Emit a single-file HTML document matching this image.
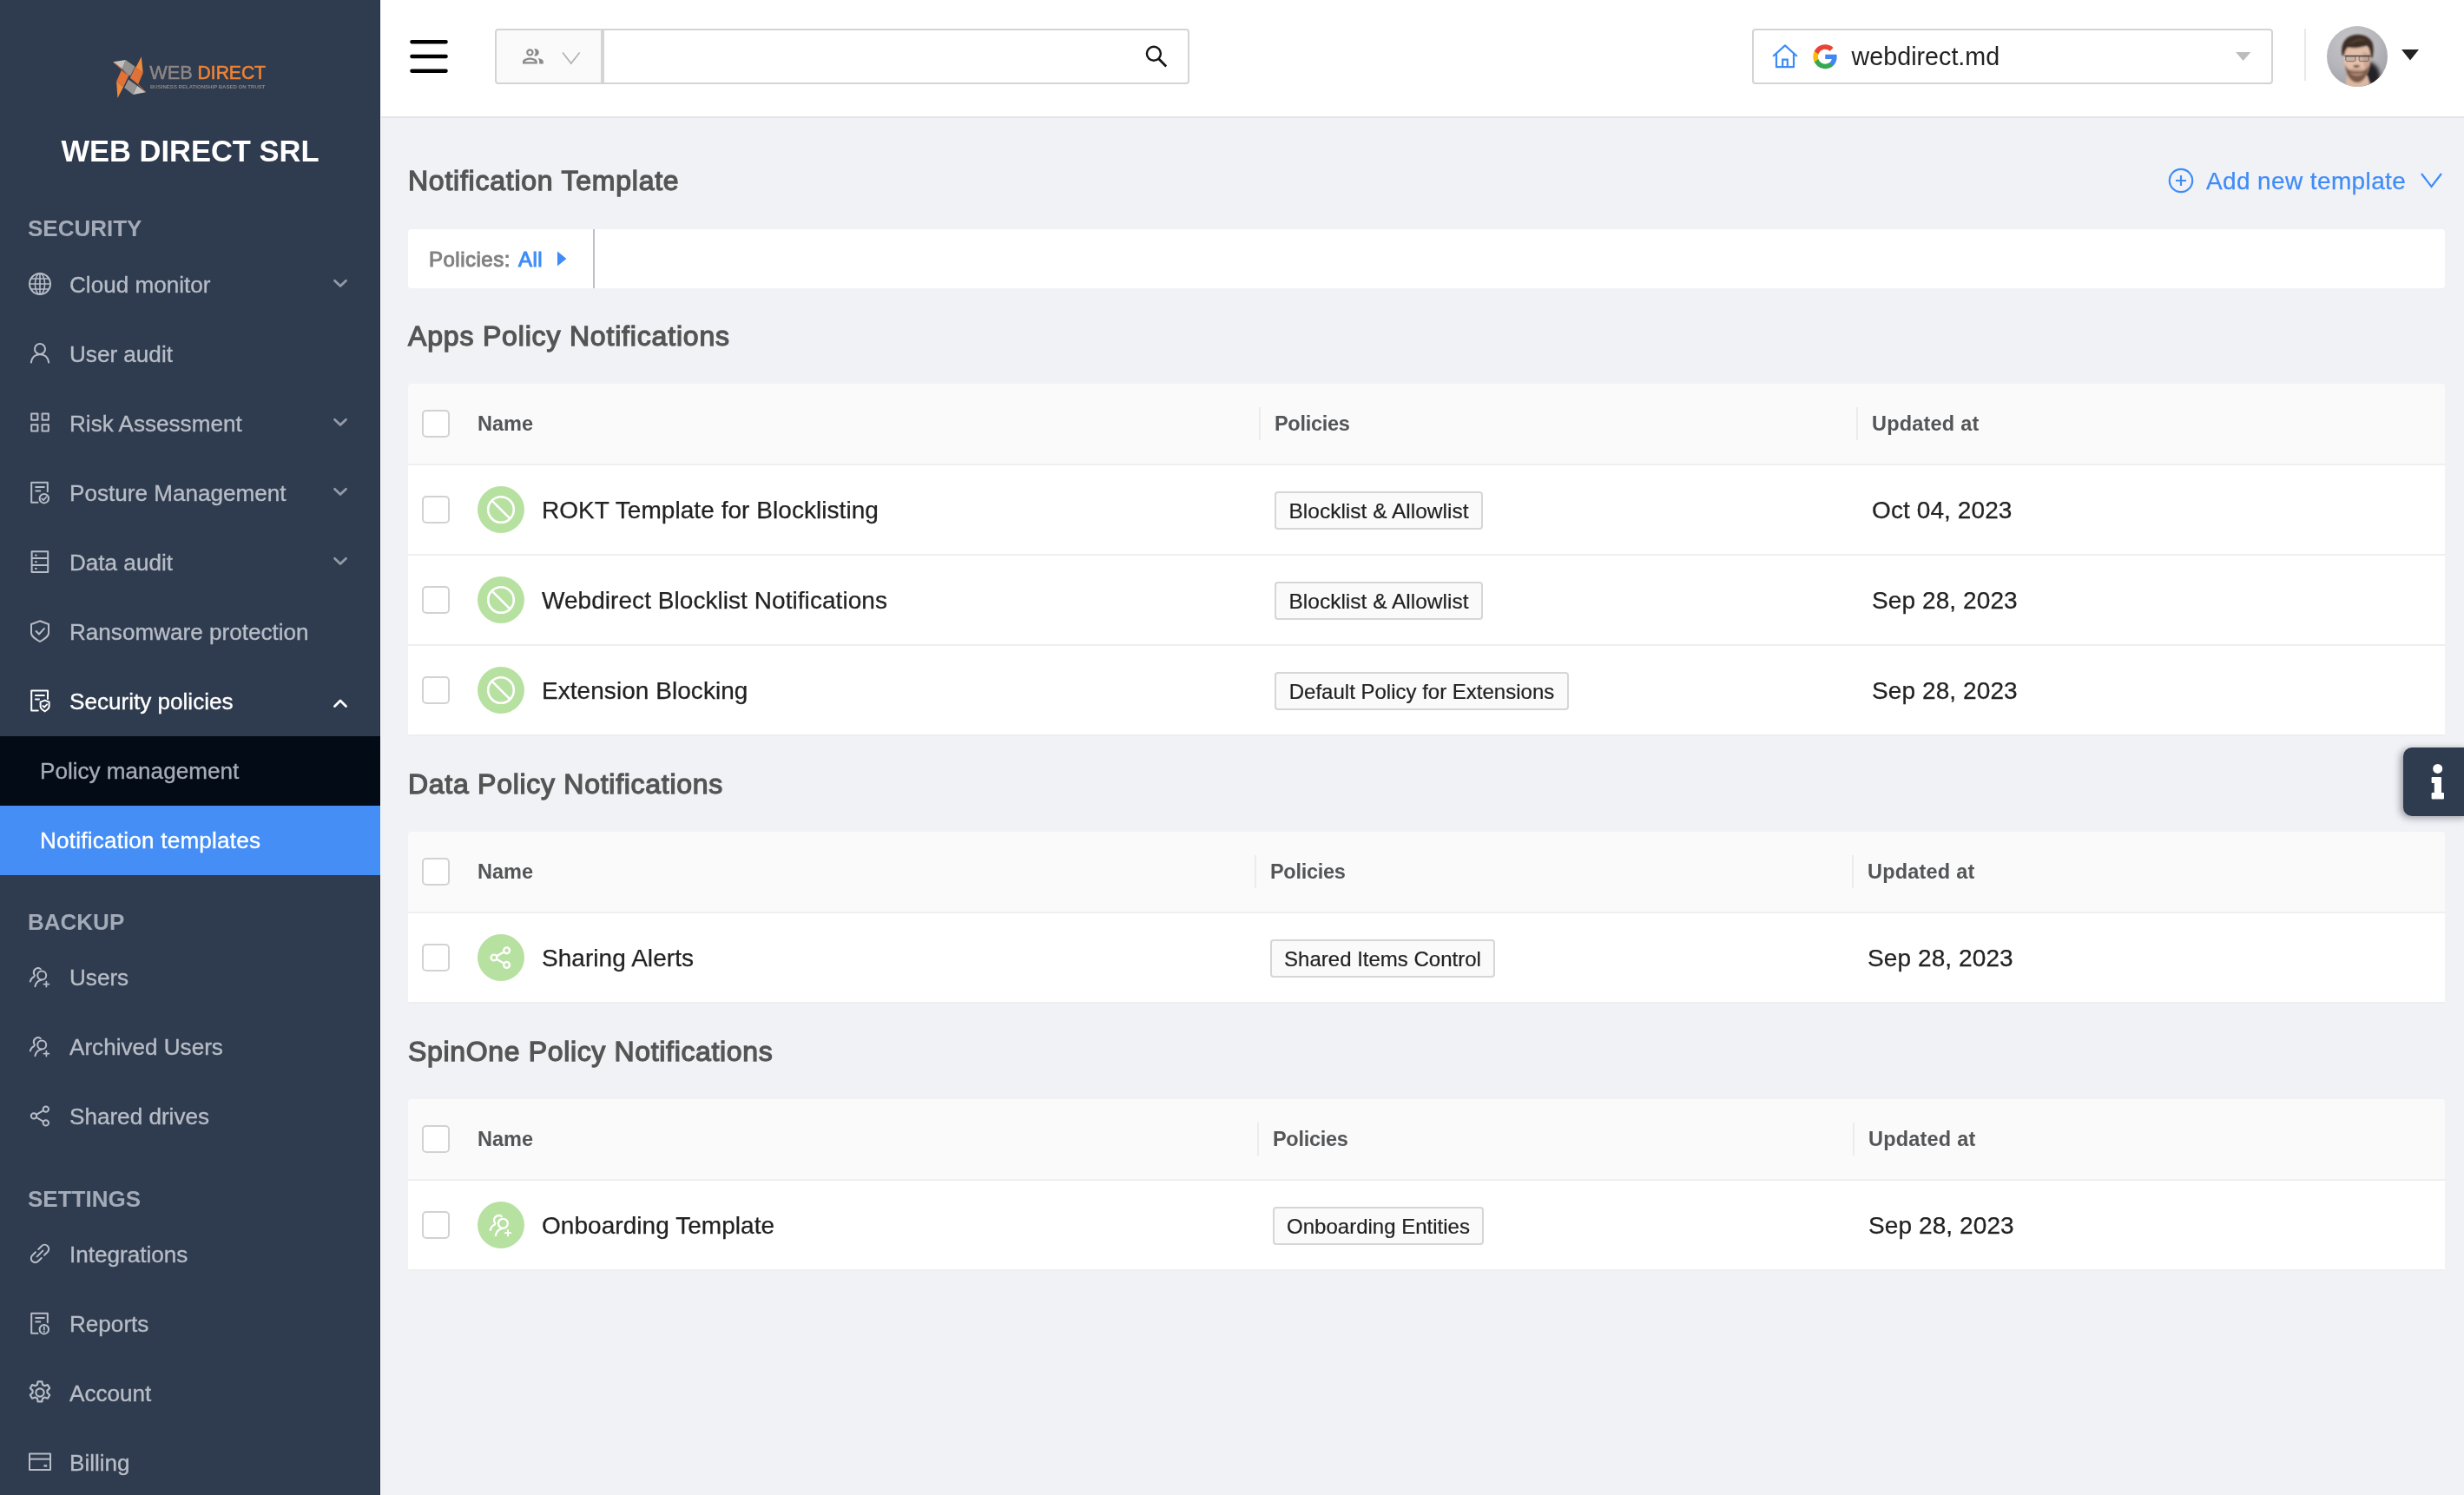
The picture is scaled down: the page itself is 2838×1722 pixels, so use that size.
<!DOCTYPE html>
<html lang="en">
<head>
<meta charset="utf-8">
<title>Notification Template</title>
<style>
*{box-sizing:border-box;margin:0;padding:0}
html,body{width:2838px;height:1722px;overflow:hidden;background:#f1f2f6;font-family:"Liberation Sans",sans-serif;}
html{will-change:transform}
body{position:relative}
.abs{position:absolute}
/* ---------- sidebar ---------- */
#sidebar{position:absolute;left:0;top:0;width:438px;height:1722px;background:#2f3b4e;overflow:hidden}
#sidebar::after{content:"";position:absolute;right:0;top:0;width:1px;height:100%;background:#293444}
.sub{z-index:2}
#edge{position:absolute;left:438px;top:0;width:1px;height:1722px;background:#fafbfc;z-index:5}
#company{position:absolute;left:0;width:438px;top:153px;height:42px;line-height:42px;text-align:center;color:#fff;font-weight:bold;font-size:34.5px;white-space:nowrap}
.sec{position:absolute;left:32px;font-weight:bold;font-size:26px;color:#a3abb8;height:30px;line-height:30px;white-space:nowrap;letter-spacing:0}
.mi{position:absolute;left:0;width:438px;height:80px;color:#b7bdc7;-webkit-text-stroke:0.35px currentColor;font-size:26.1px;white-space:nowrap}
.mi .ic{position:absolute;left:33px;top:26.3px;width:26px;height:26px}
.mi .tx{position:absolute;left:80px;top:24px;height:32px;line-height:32px}
.mi .ch{position:absolute;left:382px;top:32px;width:20px;height:14px;color:#929aa8}
.mi.on .ch{color:#fff}
.mi.on{color:#fff}
.sub{position:absolute;left:0;width:438px;height:80px;color:#a6acb6;-webkit-text-stroke:0.35px currentColor;font-size:26.1px;white-space:nowrap;background:#020b16}
.sub .tx{position:absolute;left:46px;top:24px;height:32px;line-height:32px}
.sub.act{background:#448ef6;color:#fff;letter-spacing:0.22px}
svg{display:block;overflow:visible}
.st{fill:none;stroke:currentColor;stroke-width:2;stroke-linecap:round;stroke-linejoin:round}
/* ---------- header ---------- */
#header{position:absolute;left:438px;top:0;width:2400px;height:136px;background:#fff;border-bottom:2px solid #e2e5e9}
.box{position:absolute;border:2px solid #d4d4d4;border-radius:4px;background:#fff}
/* ---------- content ---------- */
.h1{position:absolute;left:470px;font-size:32px;color:#555;white-space:nowrap;height:40px;line-height:40px;-webkit-text-stroke:1.3px #555;letter-spacing:0.86px}
.tbl{position:absolute;left:470px;width:2346px;border-radius:4px 4px 2px 2px;overflow:hidden}
.th{position:relative;height:94px;background:#fafafa;border-bottom:2px solid #efefef}
.tr{position:relative;height:104px;border-bottom:2px solid #efefef;background:#fff}
.tr.last{border-bottom-color:#eeeeee}
.cb{position:absolute;left:16px;width:32px;height:32px;border:2px solid #d2d2d2;border-radius:5px;background:#fff}
.th .cb{top:30px}
.tr .cb{top:35px}
.hl{position:absolute;top:31px;height:30px;line-height:30px;font-size:23.5px;font-weight:bold;color:#545557;white-space:nowrap}
.dv{position:absolute;top:27px;width:2px;height:38px;background:#ececec}
.av{position:absolute;left:80px;top:24px;width:54px;height:54px;border-radius:50%;background:#b7e1a0;color:#fff}
.nm{position:absolute;left:154px;top:34px;height:36px;line-height:36px;font-size:28px;-webkit-text-stroke:0.25px #222;letter-spacing:0.05px;color:#222;white-space:nowrap}
.tag{position:absolute;top:30px;height:44px;line-height:41px;border:2px solid #d6d6d6;border-radius:4px;background:#fafafa;-webkit-text-stroke:0.2px #222;font-size:24px;color:#222;padding:0;text-align:center;white-space:nowrap}
.dt{position:absolute;top:34px;height:36px;line-height:36px;font-size:28px;color:#222;white-space:nowrap;-webkit-text-stroke:0.25px #222;letter-spacing:0.1px}
</style>
</head>
<body>
<!-- SIDEBAR -->
<div id="sidebar">
  <svg class="abs" style="left:110px;top:50px;width:220px;height:80px" viewBox="0 0 220 80">
    <polygon points="34.78,19.12 45.64,26.68 40.21,37.15 38.27,36.77 30.71,29.2" fill="#959290"/>
    <polygon points="20.43,21.25 34.78,19.12 30.71,29.2" fill="#c3c1c0"/>
    <path d="M20.6 21.6L38.3 37" stroke="#e07238" stroke-width="0.9" fill="none"/>
    <polygon points="37.89,41.42 47.97,48.79 43.32,59.07 33.23,51.12" fill="#959290"/>
    <polygon points="47.97,48.79 57.86,56.35 43.32,59.07" fill="#c3c1c0"/>
    <path d="M49.1 47.4L57.7 56.1" stroke="#e07238" stroke-width="0.9" fill="none"/>
    <polygon points="46.03,27.07 54.76,34.05 49.13,47.24 39.83,39.87" fill="#e07238"/>
    <polygon points="52.82,15.24 54.76,34.05 46.5,27.4" fill="#ee8a3c"/>
    <polygon points="29.74,30.95 38.27,37.15 32.07,50.34 24.12,43.75" fill="#e07238"/>
    <polygon points="24.12,43.75 32.07,50.34 25.47,62.95" fill="#ee8a3c"/>
    <text x="62.3" y="40.7" font-family="Liberation Sans, sans-serif" font-size="21.6" fill="#8c8785" stroke="#8c8785" stroke-width="0.45" textLength="49.5" lengthAdjust="spacingAndGlyphs">WEB</text>
    <text x="117.6" y="40.7" font-family="Liberation Sans, sans-serif" font-size="21.6" fill="#ee8234" stroke="#ee8234" stroke-width="0.6" textLength="78.4" lengthAdjust="spacingAndGlyphs">DIRECT</text>
    <text x="63" y="51.8" font-family="Liberation Sans, sans-serif" font-size="5.6" font-weight="bold" fill="#8c8785" textLength="132.5" lengthAdjust="spacingAndGlyphs">BUSINESS RELATIONSHIP BASED ON TRUST</text>
  </svg>

  <div id="company">WEB DIRECT SRL</div>
  <div class="sec" style="top:248px">SECURITY</div>
  <div class="mi" style="top:287.5px"><svg class="ic" viewBox="0 0 26 26"><g class="st"><circle cx="13" cy="13" r="12"/><g stroke-width="1.6"><ellipse cx="13" cy="13" rx="5.6" ry="12"/><path d="M13 1v24M1 13h24M2.8 7h20.4M2.8 19h20.4"/></g></g></svg><span class="tx">Cloud monitor</span><svg class="ch" viewBox="0 0 20 14"><path d="M3.5 3.2 L10 9.6 L16.5 3.2" fill="none" stroke="currentColor" stroke-width="2.8" stroke-linecap="round" stroke-linejoin="round"/></svg></div>
  <div class="mi" style="top:367.5px"><svg class="ic" viewBox="0 0 26 26"><g class="st" stroke-width="2.2"><circle cx="13" cy="8" r="6"/><path d="M2.8 23.5c1-6 5-9.2 10.2-9.2s9.2 3.2 10.2 9.2"/></g></svg><span class="tx">User audit</span></div>
  <div class="mi" style="top:447.5px"><svg class="ic" viewBox="0 0 26 26"><g class="st" stroke-linejoin="miter"><rect x="3.2" y="2.6" width="7.2" height="7.2"/><rect x="15.6" y="2.6" width="7.2" height="7.2"/><rect x="3.2" y="15.2" width="7.2" height="7.2"/><rect x="15.6" y="15.2" width="7.2" height="7.2"/></g></svg><span class="tx">Risk Assessment</span><svg class="ch" viewBox="0 0 20 14"><path d="M3.5 3.2 L10 9.6 L16.5 3.2" fill="none" stroke="currentColor" stroke-width="2.8" stroke-linecap="round" stroke-linejoin="round"/></svg></div>
  <div class="mi" style="top:527.5px"><svg class="ic" viewBox="0 0 26 26"><g class="st" stroke-linejoin="miter"><path d="M10.5 24.8H3.2V1.8h18.6v10.5"/><path d="M7.5 7h11M7.5 11.6h6.5" stroke-linecap="butt"/><circle cx="17.8" cy="20.2" r="5.2"/><path d="M15.3 20.3l1.8 1.8 3.2-3.6" stroke-width="1.8"/></g></svg><span class="tx">Posture Management</span><svg class="ch" viewBox="0 0 20 14"><path d="M3.5 3.2 L10 9.6 L16.5 3.2" fill="none" stroke="currentColor" stroke-width="2.8" stroke-linecap="round" stroke-linejoin="round"/></svg></div>
  <div class="mi" style="top:607.5px"><svg class="ic" viewBox="0 0 26 26"><g class="st" stroke-linejoin="miter"><rect x="3.6" y="1.2" width="18.6" height="23.8"/><path d="M3.6 9.1h18.6M3.6 17h18.6" stroke-linecap="butt"/></g><g fill="currentColor"><rect x="7.2" y="4.6" width="2.4" height="2"/><rect x="7.2" y="12.2" width="2.4" height="2"/><rect x="7.2" y="20" width="2.4" height="2"/></g></svg><span class="tx">Data audit</span><svg class="ch" viewBox="0 0 20 14"><path d="M3.5 3.2 L10 9.6 L16.5 3.2" fill="none" stroke="currentColor" stroke-width="2.8" stroke-linecap="round" stroke-linejoin="round"/></svg></div>
  <div class="mi" style="top:687.5px"><svg class="ic" viewBox="0 0 26 26"><g class="st"><path d="M13 1.2L23 5v10.2c0 3-2.2 5.2-10 9.8C5.2 20.4 3 18.200 3 15.2V5z" stroke-linejoin="miter"/><path d="M8.6 13l3.4 3.5 6-6.6"/></g></svg><span class="tx">Ransomware protection</span></div>
  <div class="mi on" style="top:767.5px"><svg class="ic" viewBox="0 0 26 26"><g class="st" stroke-linejoin="miter" stroke-width="2.2"><path d="M10.8 24.6H3.2V1.6h18.8V11"/><path d="M7.2 7h11.4M7.2 11.4h5.6" stroke-linecap="butt"/><path d="M18.6 12.6l5 2v5.2c0 2-1.6 3.6-5 5.6-3.400-2-5-3.600-5-5.600v-5.200z" stroke-width="2"/><path d="M16.4 19l1.700 1.700 3-3.400" stroke-width="1.8"/></g></svg><span class="tx">Security policies</span><svg class="ch" viewBox="0 0 20 14"><path d="M3.5 13.4 L10 7 L16.5 13.4" fill="none" stroke="currentColor" stroke-width="2.8" stroke-linecap="round" stroke-linejoin="round"/></svg></div>
  <div class="sub" style="top:848px"><span class="tx">Policy management</span></div>
  <div class="sub act" style="top:928px"><span class="tx">Notification templates</span></div>
  <div class="sec" style="top:1047px">BACKUP</div>
  <div class="mi" style="top:1085.5px"><svg class="ic" viewBox="0 0 26 26"><g class="st" stroke-width="2"><circle cx="15.2" cy="11.600" r="5"/><path d="M7.400 24.200c.800-4 3.600-6.600 7.200-7.400"/><path d="M13.800 4.200A5 5 0 0 0 6 9.600c.200.800.500 1.400 1 2"/><path d="M1.800 18.600c.6-2.800 2.200-4.800 4.600-5.800"/><path d="M20.400 18.600v6M17.400 21.600h6" stroke-width="1.800"/></g></svg><span class="tx">Users</span></div>
  <div class="mi" style="top:1166px"><svg class="ic" viewBox="0 0 26 26"><g class="st" stroke-width="2"><circle cx="15.2" cy="11.600" r="5"/><path d="M7.400 24.200c.800-4 3.600-6.600 7.200-7.400"/><path d="M13.800 4.200A5 5 0 0 0 6 9.600c.200.800.500 1.400 1 2"/><path d="M1.800 18.600c.6-2.800 2.200-4.800 4.600-5.800"/><path d="M20.400 18.600v6M17.400 21.600h6" stroke-width="1.800"/></g></svg><span class="tx">Archived Users</span></div>
  <div class="mi" style="top:1246px"><svg class="ic" viewBox="0 0 26 26"><g class="st" stroke-width="2.2"><circle cx="19.800" cy="5.600" r="3.200"/><circle cx="6" cy="13.400" r="3.200"/><circle cx="19.800" cy="21.400" r="3.200"/><path d="M8.800 11.800l8.200-4.600M8.800 15l8.200 4.800"/></g></svg><span class="tx">Shared drives</span></div>
  <div class="sec" style="top:1366px">SETTINGS</div>
  <div class="mi" style="top:1405px"><svg class="ic" viewBox="0 0 26 26"><g class="st" stroke-width="2.200"><path d="M11.200 8l3.800-3.800a4.800 4.800 0 0 1 6.800 6.800L18 14.800"/><path d="M14.800 18l-3.800 3.800a4.800 4.800 0 0 1-6.800-6.800L8 11.200"/><path d="M9.600 16.400l6.800-6.800"/></g></svg><span class="tx">Integrations</span></div>
  <div class="mi" style="top:1485px"><svg class="ic" viewBox="0 0 26 26"><g class="st" stroke-linejoin="miter"><path d="M10.500 24.800H3.200V1.800h18.600v10.500"/><path d="M7.500 7h11M7.500 11.600h6.500" stroke-linecap="butt"/><circle cx="17.800" cy="20.200" r="5.200"/><path d="M17.800 17.400v3.200" stroke-width="1.800"/></g><circle cx="17.800" cy="22.800" r="1" fill="currentColor"/></svg><span class="tx">Reports</span></div>
  <div class="mi" style="top:1565px"><svg class="ic" viewBox="0 0 26 26"><g class="st" stroke-width="1.85" transform="translate(13 13) scale(1.1) translate(-13 -13)"><circle cx="13" cy="13" r="4.200"/><path d="M10.900 1.500h4.200l.7 3.300 2.100 1.200 3.200-1.100 2.100 3.600-2.500 2.300v2.400l2.500 2.300-2.100 3.600-3.200-1.100-2.100 1.200-.7 3.300h-4.200l-.7-3.300-2.100-1.200-3.200 1.100-2.100-3.600 2.500-2.300v-2.400L2.800 8.500l2.100-3.600 3.200 1.100 2.100-1.200z"/></g></svg><span class="tx">Account</span></div>
  <div class="mi" style="top:1645px"><svg class="ic" viewBox="0 0 26 26"><g class="st" stroke-linejoin="miter"><rect x="1" y="3.400" width="24" height="18.600"/><path d="M1 9.600h24" stroke-linecap="butt"/><path d="M17.400 17.400h3.800" stroke-linecap="butt" stroke-width="2.400"/></g></svg><span class="tx">Billing</span></div>
</div>
<div id="edge"></div>
<!-- HEADER -->
<div id="header">
  <!-- hamburger -->
  <svg class="abs" style="left:34px;top:44px;width:44px;height:42px" viewBox="0 0 44 42"><g fill="#000"><rect x="0.300" y="1.900" width="43.400" height="4.500" rx="1.800"/><rect x="0.300" y="18.650" width="43.400" height="4.500" rx="1.800"/><rect x="0.300" y="35.400" width="43.400" height="4.500" rx="1.800"/></g></svg>
  <!-- search -->
  <div class="box" style="left:132px;top:33px;width:124px;height:64px;background:#fafafa;border-radius:4px 0 0 4px"></div>
  <div class="box" style="left:256px;top:33px;width:676px;height:64px;border-radius:0 4px 4px 0"></div>
  <svg class="abs" style="left:163px;top:55px;width:26px;height:20px" viewBox="0 0 26 20"><g fill="#8a8a8a"><path d="M9.400 9.600a4.200 4.200 0 1 0 0-8.400 4.200 4.200 0 0 0 0 8.400zm0-6.200a2 2 0 1 1 0 4 2 2 0 0 1 0-4z"/><path d="M9.400 11.400c-3 0-8.400 1.500-8.400 4.400v2.600h16.800v-2.600c0-2.900-5.400-4.400-8.400-4.400zM3.400 16.200c.3-.9 3.200-2.400 6-2.400s5.700 1.500 6 2.400z"/><path d="M15.600 9.600a4.200 4.200 0 0 0 0-8.400c-.5 0-1 .1-1.500.3a6 6 0 0 1 0 7.800c.5.200 1 .3 1.500.3z"/><path d="M18.200 11.900c1.200 1 2 2.300 2 3.900v2.600h4.600v-2.600c0-2.200-3.400-3.500-6.600-3.900z"/></g></svg>
  <svg class="abs" style="left:208px;top:59px;width:24px;height:16px" viewBox="0 0 24 16"><path d="M2 1.500L11.800 14 21.600 1.500" fill="none" stroke="#b4b4b4" stroke-width="1.800"/></svg>
  <svg class="abs" style="left:879px;top:51px;width:30px;height:30px" viewBox="0 0 30 30"><circle cx="11.900" cy="10.800" r="8" fill="none" stroke="#161616" stroke-width="2.400"/><path d="M17.600 16.800L26.200 25.600" stroke="#161616" stroke-width="2.800" fill="none"/></svg>
  <!-- domain select -->
  <div class="box" style="left:1580px;top:33px;width:600px;height:64px"></div>
  <svg class="abs" style="left:1603px;top:50px;width:30px;height:30px" viewBox="0 0 30 30"><g fill="none" stroke="#3d8bf8" stroke-width="2.200" stroke-linejoin="round" stroke-linecap="round"><path d="M1.800 14.200L15 2.400l13.200 11.800"/><path d="M5 11.800v15.400h20V11.800"/><path d="M12.200 27V18.600h5.600V27" stroke-linejoin="miter"/></g></svg>
  <svg class="abs" style="left:1648.700px;top:49.700px;width:30.500px;height:30.500px" viewBox="0 0 48 48"><path fill="#4285F4" d="M45.100 24.500c0-1.600-.1-3.100-.4-4.500H24v8.500h11.800c-.5 2.800-2.100 5.100-4.400 6.700v5.500h7.100c4.200-3.800 6.600-9.500 6.600-16.200z"/><path fill="#34A853" d="M24 46c5.900 0 10.900-2 14.500-5.300l-7.100-5.500c-2 1.300-4.500 2.100-7.400 2.100-5.700 0-10.500-3.900-12.300-9H4.400v5.700C8 41.100 15.400 46 24 46z"/><path fill="#FBBC05" d="M11.700 28.300c-.400-1.300-.700-2.800-.7-4.300s.300-2.900.7-4.300V14H4.400C2.900 17 2 20.400 2 24s.9 7 2.400 10z"/><path fill="#EA4335" d="M24 10.700c3.200 0 6.100 1.100 8.400 3.300l6.300-6.300C34.900 4.200 29.900 2 24 2 15.400 2 8 6.900 4.400 14l7.300 5.700c1.800-5.200 6.600-9 12.300-9z"/></svg>
  <div class="abs" style="left:1694.600px;top:47px;height:36px;line-height:36px;font-size:28.700px;color:#222;white-space:nowrap">webdirect.md</div>
  <svg class="abs" style="left:2137px;top:60px;width:18px;height:10px" viewBox="0 0 18 10"><path d="M0 0h17.400L8.700 10z" fill="#bdbdbd"/></svg>
  <div class="abs" style="left:2216px;top:33px;width:2px;height:60px;background:#e9e9e9"></div>
  <svg class="abs" style="left:2242px;top:30px;width:70px;height:70px" viewBox="0 0 70 70">
    <defs>
      <clipPath id="avc"><circle cx="35" cy="35" r="35"/></clipPath>
      <radialGradient id="avbg" cx="0.4" cy="0.25" r="0.85"><stop offset="0" stop-color="#c5c5c9"/><stop offset="0.55" stop-color="#b5b5bb"/><stop offset="1" stop-color="#9c9ca3"/></radialGradient>
      <filter id="avb" x="-20%" y="-20%" width="140%" height="140%"><feGaussianBlur stdDeviation="0.85"/></filter>
      <filter id="avb2" x="-30%" y="-30%" width="160%" height="160%"><feGaussianBlur stdDeviation="2"/></filter>
    </defs>
    <g clip-path="url(#avc)">
      <rect width="70" height="70" fill="url(#avbg)"/>
      <path d="M45 41C55 40 62 50 61 60L57 72H43z" fill="#232328" filter="url(#avb2)"/>
      <g filter="url(#avb)">
        <path d="M23 57L21 72H52L47 57z" fill="#dcb7a2"/>
        <path d="M19.500 31C19 19 50.500 19 50.500 31L50 42C49 55 42 64.400 35 64.400 28 64.400 21 55 20 42z" fill="#e3bea8"/>
        <path d="M41 30C46 30 49.500 32 50.500 36L50 46C48 50 46 52 44 54z" fill="#c59a86" opacity="0.65"/>
        <path d="M21 44C22 57 28 65 35 65 42 65 47.500 57 49 44 46.500 50.500 43 52 35 52 27 52 23.500 50.500 21 44z" fill="#7a5a48"/>
        <path d="M27 53.600C30 55.200 40 55.200 43 53.600 41 58.600 29 58.600 27 53.600z" fill="#caa18c" opacity="0.750"/>
        <path d="M25.500 48.400C30 52 38.500 52 42.600 48.400 38.500 50.600 30 50.600 25.500 48.400z" fill="#a3655d"/>
        <path d="M30 46.300C31.500 44.800 36.800 44.800 38.300 46.300 37 48 31.400 48 30 46.300z" fill="#1f120e"/>
        <path d="M17.600 34C15.600 22 20 13 30 10.400 40 8.200 50 12 52.800 20 54.400 26 53.600 31 52.600 36.500L50.200 36.500C50.200 29 49 25 46 22.400 40 25 30 26 24 24.600 21.600 27.400 20.600 30.400 20 34.500z" fill="#3d2e25"/>
        <path d="M25 22C29 15.500 38 13 47 16.500 40 16 32 17.500 25 22z" fill="#5d4838" opacity="0.8"/>
      </g>
      <g opacity="0.820"><rect x="21.800" y="34.600" width="11.200" height="6" rx="1.600" fill="rgba(120,135,150,0.28)" stroke="#55555a" stroke-width="0.900"/><rect x="37.200" y="34.600" width="11.200" height="6" rx="1.600" fill="rgba(120,135,150,0.28)" stroke="#55555a" stroke-width="0.900"/><path d="M20.600 34.500H50" stroke="#38383c" stroke-width="1.700" fill="none"/></g>
    </g>
  </svg>

  <svg class="abs" style="left:2328px;top:57px;width:20px;height:13px" viewBox="0 0 20 13"><path d="M0 0h20L10 12.400z" fill="#222"/></svg>

</div>
<!-- CONTENT -->
<div class="h1" style="top:188px;letter-spacing:0.76px">Notification Template</div>
<!-- add new template -->
<svg class="abs" style="left:2497px;top:193px;width:30px;height:30px" viewBox="0 0 30 30"><g fill="none" stroke="#3f8cf7" stroke-width="2.200"><circle cx="15" cy="15" r="13.200"/><path d="M15 9v12M9 15h12"/></g></svg>
<div class="abs" style="left:2541px;top:191px;height:36px;line-height:36px;font-size:28px;color:#3f8cf7;white-space:nowrap;letter-spacing:0.38px;-webkit-text-stroke:0.25px #3f8cf7">Add new template</div>
<svg class="abs" style="left:2787px;top:198px;width:27px;height:20px" viewBox="0 0 27 20"><path d="M2 2L13.500 17 25 2" fill="none" stroke="#3f8cf7" stroke-width="2.200"/></svg>
<!-- filter bar -->
<div class="abs" style="left:470px;top:264px;width:2346px;height:68px;background:#fff;border-radius:4px"></div>
<div class="abs" style="left:494px;top:284px;height:30px;line-height:30px;font-size:24px;color:#828282;white-space:nowrap;-webkit-text-stroke:1px #828282;letter-spacing:0.5px">Policies:</div>
<div class="abs" style="left:597px;top:284px;height:30px;line-height:30px;font-size:24px;color:#3f8cf7;white-space:nowrap;-webkit-text-stroke:1px #3f8cf7;letter-spacing:0.5px">All</div>
<svg class="abs" style="left:642px;top:289px;width:11px;height:18px" viewBox="0 0 11 18"><path d="M0 0.400L10.400 9 0 17.600z" fill="#3f8cf7"/></svg>
<div class="abs" style="left:683px;top:264px;width:2px;height:68px;background:#bcc0c8"></div>

<!-- Apps -->
<div class="h1" style="top:367px;letter-spacing:0.82px">Apps Policy Notifications</div>
<div class="tbl" style="top:442px">
  <div class="th"><div class="cb"></div><div class="hl" style="left:80px">Name</div><div class="dv" style="left:980px"></div><div class="hl" style="left:998px;letter-spacing:-0.3px">Policies</div><div class="dv" style="left:1668px"></div><div class="hl" style="left:1686px;letter-spacing:0.2px">Updated at</div></div>
  <div class="tr"><div class="cb"></div><div class="av"><svg viewBox="0 0 54 54" width="54" height="54"><g fill="none" stroke="#fff" stroke-width="2.600"><circle cx="27" cy="27" r="14.800"/><path d="M16.600 16.600L37.400 37.400"/></g></svg>
</div><div class="nm">ROKT Template for Blocklisting</div><div class="tag" style="left:998px;width:240px;font-size:24.5px">Blocklist &amp; Allowlist</div><div class="dt" style="left:1686px">Oct 04, 2023</div></div>
  <div class="tr"><div class="cb"></div><div class="av"><svg viewBox="0 0 54 54" width="54" height="54"><g fill="none" stroke="#fff" stroke-width="2.600"><circle cx="27" cy="27" r="14.800"/><path d="M16.600 16.600L37.400 37.400"/></g></svg>
</div><div class="nm">Webdirect Blocklist Notifications</div><div class="tag" style="left:998px;width:240px;font-size:24.5px">Blocklist &amp; Allowlist</div><div class="dt" style="left:1686px">Sep 28, 2023</div></div>
  <div class="tr last"><div class="cb"></div><div class="av"><svg viewBox="0 0 54 54" width="54" height="54"><g fill="none" stroke="#fff" stroke-width="2.600"><circle cx="27" cy="27" r="14.800"/><path d="M16.600 16.600L37.400 37.400"/></g></svg>
</div><div class="nm">Extension Blocking</div><div class="tag" style="left:998px;width:339px">Default Policy for Extensions</div><div class="dt" style="left:1686px">Sep 28, 2023</div></div>
</div>

<!-- Data -->
<div class="h1" style="top:883px;letter-spacing:0.72px">Data Policy Notifications</div>
<div class="tbl" style="top:958px">
  <div class="th"><div class="cb"></div><div class="hl" style="left:80px">Name</div><div class="dv" style="left:975px"></div><div class="hl" style="left:993px;letter-spacing:-0.3px">Policies</div><div class="dv" style="left:1663px"></div><div class="hl" style="left:1681px;letter-spacing:0.2px">Updated at</div></div>
  <div class="tr last"><div class="cb"></div><div class="av"><svg viewBox="0 0 54 54" width="54" height="54"><g fill="none" stroke="#fff" stroke-width="2.400"><circle cx="33.600" cy="18.800" r="3.400"/><circle cx="19" cy="27" r="3.400"/><circle cx="33.600" cy="35.400" r="3.400"/><path d="M22 25.300l8.600-4.900M22 28.700l8.600 5"/></g></svg>
</div><div class="nm">Sharing Alerts</div><div class="tag" style="left:993px;width:259px">Shared Items Control</div><div class="dt" style="left:1681px">Sep 28, 2023</div></div>
</div>

<!-- SpinOne -->
<div class="h1" style="top:1191px;letter-spacing:0.66px">SpinOne Policy Notifications</div>
<div class="tbl" style="top:1266px">
  <div class="th"><div class="cb"></div><div class="hl" style="left:80px">Name</div><div class="dv" style="left:978px"></div><div class="hl" style="left:996px;letter-spacing:-0.3px">Policies</div><div class="dv" style="left:1664px"></div><div class="hl" style="left:1682px;letter-spacing:0.2px">Updated at</div></div>
  <div class="tr last"><div class="cb"></div><div class="av"><svg viewBox="0 0 54 54" width="54" height="54"><g transform="translate(12.8 12.6) scale(1.09)" fill="none" stroke="#fff" stroke-width="2.1" stroke-linecap="round"><circle cx="15.200" cy="11.600" r="5"/><path d="M7.400 24.200c.8-4 3.600-6.600 7.200-7.400"/><path d="M13.800 4.200A5 5 0 0 0 6 9.600c.2.800.5 1.400 1 2"/><path d="M1.800 18.600c.6-2.800 2.200-4.800 4.600-5.800"/><path d="M20.400 18.600v6M17.400 21.600h6" stroke-width="1.800"/></g></svg>
</div><div class="nm">Onboarding Template</div><div class="tag" style="left:996px;width:243px">Onboarding Entities</div><div class="dt" style="left:1682px">Sep 28, 2023</div></div>
</div>

<!-- info button -->
<div class="abs" style="left:2768px;top:861px;width:80px;height:79px;background:#2f3b4e;border-radius:10px;box-shadow:-3px 2px 9px rgba(40,45,60,0.450)"></div>
<svg class="abs" style="left:2798px;top:878px;width:20px;height:44px" viewBox="0 0 20 44"><g fill="#fff"><circle cx="9.700" cy="7.400" r="5.500"/><path d="M3.600 17h9.400a1 1 0 0 1 1 1v17h2a1 1 0 0 1 1 1v5.400a1 1 0 0 1-1 1H3.600a1 1 0 0 1-1-1V36a1 1 0 0 1 1-1h2.200V24H3.600a1 1 0 0 1-1-1v-5a1 1 0 0 1 1-1z"/></g></svg>

</body>
</html>
